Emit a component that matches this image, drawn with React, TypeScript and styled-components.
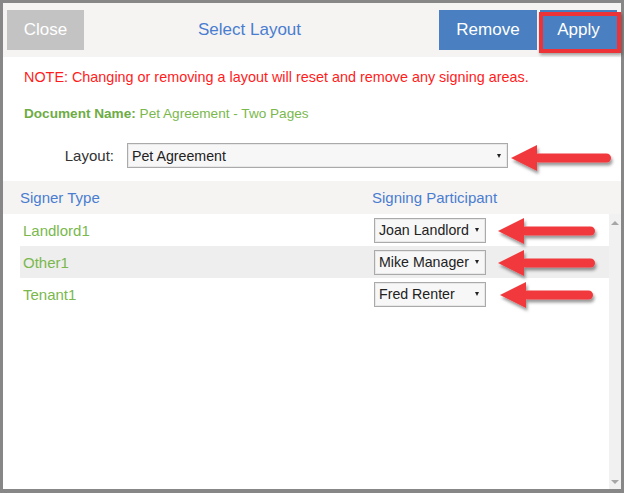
import styled, { createGlobalStyle } from "styled-components";

const GlobalStyle = createGlobalStyle`
  html, body {
    margin: 0;
    padding: 0;
    background: #878787;
    font-family: "Liberation Sans", Arial, sans-serif;
  }
`;

const Frame = styled.div`
  box-sizing: border-box;
  width: 624px;
  height: 493px;
  padding: 3px 3px 4px 3px;
`;

const Modal = styled.div`
  height: 100%;
  background: #fff;
  display: flex;
  flex-direction: column;
`;

const Header = styled.div`
  height: 54px;
  flex-shrink: 0;
  background: #f5f4f3;
  display: flex;
  align-items: center;
  padding: 0 4px;
  gap: 3px;
`;

const Button = styled.div<{ $tone: "grey" | "blue"; $width: number }>`
  position: relative;
  width: ${({ $width }) => $width}px;
  height: 40px;
  display: flex;
  align-items: center;
  justify-content: center;
  background: ${({ $tone }) => ($tone === "grey" ? "#c3c3c3" : "#4a7fc1")};
  color: #fff;
  font-size: 17px;
`;

const Title = styled.div`
  margin-left: 111px;
  flex: 1;
  color: #4a7dd0;
  font-size: 17px;
`;

const Highlight = styled.div`
  position: absolute;
  left: -1px;
  top: 2px;
  width: 82px;
  height: 41px;
  box-sizing: border-box;
  border: 4px solid #ee3338;
  box-shadow: 1px 2px 3px rgba(0, 0, 0, 0.35);
`;

const Note = styled.div`
  margin: 12px 0 0 21px;
  font-size: 14.4px;
  line-height: 16px;
  color: #ff1c1c;
`;

const DocName = styled.div`
  margin: 21px 0 0 21px;
  font-size: 13.6px;
  line-height: 16px;
  color: #7ab84d;

  b {
    color: #6eac45;
  }
`;

const LayoutRow = styled.div`
  margin: 21px 0 0 21px;
  display: flex;
  align-items: center;
  gap: 13px;
`;

const FieldLabel = styled.div`
  width: 90px;
  text-align: right;
  font-size: 15px;
  color: #333;
`;

const Select = styled.div<{ $width: number }>`
  position: relative;
  box-sizing: border-box;
  width: ${({ $width }) => $width}px;
  height: 25px;
  background: #f7f7f7;
  border: 1px solid #aaa;
  box-shadow: inset 0 0 0 1px #e8e8e8;
  display: flex;
  align-items: center;
  padding-left: 4px;
  font-size: 14.2px;
  color: #222;
  white-space: nowrap;
`;

const Caret = styled.span`
  position: absolute;
  right: 6px;
  top: 50%;
  margin-top: -2px;
  width: 0;
  height: 0;
  border-left: 2.5px solid transparent;
  border-right: 2.5px solid transparent;
  border-top: 4px solid #222;
`;

const ArrowBox = styled.svg<{ $left: number; $top: number }>`
  position: absolute;
  left: calc(100% + ${({ $left }) => $left}px);
  top: ${({ $top }) => $top}px;
  overflow: visible;
`;

const TableHead = styled.div`
  margin-top: 13px;
  height: 33px;
  flex-shrink: 0;
  background: #f5f4f3;
  display: grid;
  grid-template-columns: 352px 1fr;
  align-items: center;
  padding-left: 17px;
  font-size: 15px;
  color: #4a7dd0;
`;

const Body = styled.div`
  flex: 1;
  display: flex;
  min-height: 0;
`;

const List = styled.div`
  flex: 1;
  margin-left: 17px;
`;

const Row = styled.div<{ $striped: boolean }>`
  height: 32px;
  display: grid;
  grid-template-columns: 354px 1fr;
  align-items: center;
  background: ${({ $striped }) => ($striped ? "#eeeeee" : "#fff")};
`;

const SignerName = styled.div`
  padding-left: 3px;
  font-size: 15px;
  color: #7ab84d;
`;

const Scrollbar = styled.div`
  width: 12px;
  background: #f1f1f1;
  display: flex;
  flex-direction: column;
  justify-content: space-between;
  align-items: center;
  padding: 7px 0 5px;
`;

const ScrollArrow = styled.span<{ $down?: boolean }>`
  width: 0;
  height: 0;
  border-left: 4px solid transparent;
  border-right: 4px solid transparent;
  ${({ $down }) =>
    $down ? "border-top: 4px solid #a6a6a6;" : "border-bottom: 4px solid #a6a6a6;"}
`;

function RedArrow({ length, left, top }: { length: number; left: number; top: number }) {
  const h = 26;
  const head = 26;
  return (
    <ArrowBox $left={left} $top={top} width={length} height={h} viewBox={`0 0 ${length} ${h}`}>
      <defs>
        <filter id="arrowShadow" x="-10%" y="-30%" width="130%" height="180%">
          <feDropShadow dx="1.5" dy="3" stdDeviation="1.5" floodColor="#000" floodOpacity="0.4" />
        </filter>
      </defs>
      <g filter="url(#arrowShadow)" fill="#f0393c">
        <polygon points={`0,${h / 2} ${head},0 ${head},${h}`} />
        <rect x={head - 3} y={h / 2 - 4.5} width={length - head + 3} height={9} rx={4.5} />
      </g>
    </ArrowBox>
  );
}

const signers = [
  { type: "Landlord1", who: "Joan Landlord" },
  { type: "Other1", who: "Mike Manager" },
  { type: "Tenant1", who: "Fred Renter" },
];

export default function App() {
  return (
    <Frame>
      <GlobalStyle />
      <Modal>
        <Header>
          <Button $tone="grey" $width={77}>Close</Button>
          <Title>Select Layout</Title>
          <Button $tone="blue" $width={98}>Remove</Button>
          <Button $tone="blue" $width={77}>
            Apply
            <Highlight />
          </Button>
        </Header>

        <Note>NOTE: Changing or removing a layout will reset and remove any signing areas.</Note>
        <DocName>
          <b>Document Name:</b> Pet Agreement - Two Pages
        </DocName>

        <LayoutRow>
          <FieldLabel>Layout:</FieldLabel>
          <Select $width={381}>
            Pet Agreement
            <Caret />
            <RedArrow length={100} left={4} top={1} />
          </Select>
        </LayoutRow>

        <TableHead>
          <span>Signer Type</span>
          <span>Signing Participant</span>
        </TableHead>

        <Body>
          <List>
            {signers.map((s, i) => (
              <Row key={s.type} $striped={i === 1}>
                <SignerName>{s.type}</SignerName>
                <Select $width={112}>
                  {s.who}
                  <Caret />
                  <RedArrow length={i === 2 ? 93 : 97} left={i === 2 ? 15 : 13} top={-1} />
                </Select>
              </Row>
            ))}
          </List>
          <Scrollbar>
            <ScrollArrow />
            <ScrollArrow $down />
          </Scrollbar>
        </Body>
      </Modal>
    </Frame>
  );
}
